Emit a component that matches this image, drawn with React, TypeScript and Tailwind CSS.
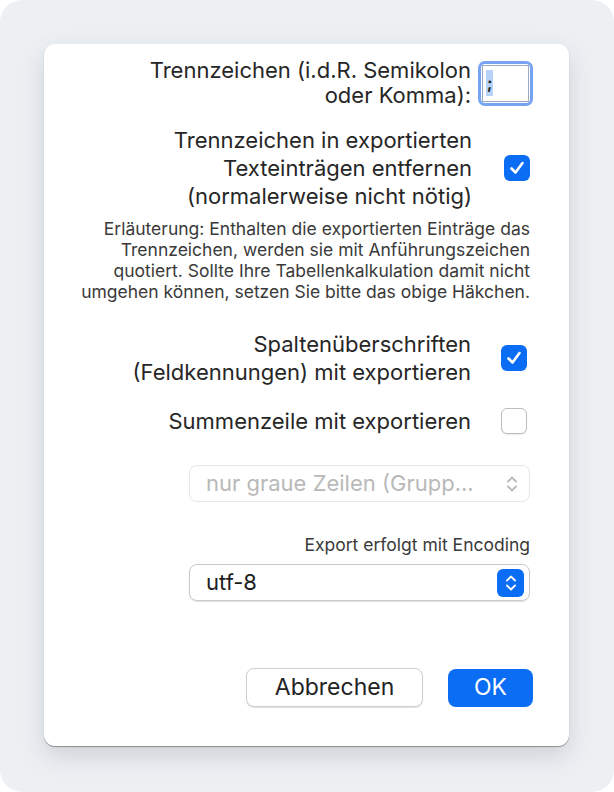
import React from "react";

const font = { fontFamily: 'Inter, "Liberation Sans", Arial, sans-serif' };

function Check({ checked }: { checked: boolean }) {
  if (!checked) {
    return (
      <div className="w-[26px] h-[26px] rounded-[6px] border border-[#bdbdbd] bg-white shadow-[0_1px_1px_rgba(0,0,0,0.08)]" />
    );
  }
  return (
    <div className="w-[26px] h-[26px] rounded-[6px] bg-[#0b6cf4] flex items-center justify-center">
      <svg width="18" height="18" viewBox="0 0 18 18" fill="none">
        <path d="M3.5 9.5 L7.5 13.5 L14.5 4" stroke="white" strokeWidth="2.6" strokeLinecap="round" strokeLinejoin="round" />
      </svg>
    </div>
  );
}

function Chevrons({ color }: { color: string }) {
  return (
    <svg width="14" height="20" viewBox="0 0 14 20" fill="none">
      <path d="M3 7.5 L7 3.5 L11 7.5" stroke={color} strokeWidth="1.8" strokeLinecap="round" strokeLinejoin="round" />
      <path d="M3 12.5 L7 16.5 L11 12.5" stroke={color} strokeWidth="1.8" strokeLinecap="round" strokeLinejoin="round" />
    </svg>
  );
}

export default function App() {
  return (
    <div className="w-[614px] h-[792px] bg-white" style={font}>
      <div className="w-[614px] h-[792px] rounded-[22px] bg-[#edf0f3] pt-[44px] pl-[44px]">
        <div className="w-[525px] h-[702px] rounded-[11px] bg-white shadow-[0_1px_1px_rgba(0,0,0,0.35),0_10px_24px_rgba(60,70,90,0.18)] pr-[36px] pt-[14px] flex flex-col items-end text-[#262626]">
          {/* separator */}
          <div className="flex items-center">
            <div className="text-right text-[22px] leading-[25px]">
              Trennzeichen (i.d.R. Semikolon
              <br />
              oder Komma):
            </div>
            <div className="ml-[7px] w-[55px] h-[45px] rounded-[7px] border-[3px] border-[#76a3f4] p-[1px]">
              <div className="w-full h-full bg-white border border-[#9aa9c4] pl-[3px] pt-[4px]">
                <span className="inline-block bg-[#b7d3fb] text-[16px] leading-[26px] px-[1px] font-bold text-[#222]">;</span>
              </div>
            </div>
          </div>

          {/* remove separators */}
          <div className="flex items-center mt-[18px] mr-[3px]">
            <div className="text-right text-[22px] leading-[28px]">
              Trennzeichen in exportierten
              <br />
              Texteinträgen entfernen
              <br />
              (normalerweise nicht nötig)
            </div>
            <div className="ml-[32px]">
              <Check checked />
            </div>
          </div>

          <div className="mt-[8px] mr-[3px] text-right text-[17.5px] leading-[21px] text-[#3a3a3a]">
            Erläuterung: Enthalten die exportierten Einträge das
            <br />
            Trennzeichen, werden sie mit Anführungszeichen
            <br />
            quotiert. Sollte Ihre Tabellenkalkulation damit nicht
            <br />
            umgehen können, setzen Sie bitte das obige Häkchen.
          </div>

          <div className="flex items-center mt-[28px] mr-[6px]">
            <div className="text-right text-[22px] leading-[28px]">
              Spaltenüberschriften
              <br />
              (Feldkennungen) mit exportieren
            </div>
            <div className="ml-[30px]">
              <Check checked />
            </div>
          </div>

          <div className="flex items-center mt-[21px] mr-[6px]">
            <div className="text-right text-[22px] leading-[28px]">Summenzeile mit exportieren</div>
            <div className="ml-[30px]">
              <Check checked={false} />
            </div>
          </div>

          <div className="mt-[30px] mr-[3px] w-[341px] h-[37px] rounded-[8px] border border-[#e6e6e6] flex items-center justify-between pl-[16px] pr-[10px] text-[22px] text-[#b9b9b9]">
            <span>nur graue Zeilen (Grupp...</span>
            <Chevrons color="#b9b9b9" />
          </div>

          <div className="mt-[33px] mr-[3px] text-[17.5px] leading-[20px] text-[#3a3a3a]">Export erfolgt mit Encoding</div>

          <div className="mt-[9px] mr-[3px] w-[341px] h-[37px] rounded-[8px] border border-[#c9c9c9] shadow-[0_1px_1px_rgba(0,0,0,0.12)] flex items-center justify-between pl-[16px] pr-[5px] text-[22px] text-[#1d1d1d]">
            <span>utf-8</span>
            <div className="w-[27px] h-[28px] rounded-[6px] bg-[#0b6cf4] flex items-center justify-center">
              <Chevrons color="white" />
            </div>
          </div>

          <div className="mt-[67px] flex items-center gap-[25px]">
            <div className="w-[177px] h-[39px] rounded-[8px] border border-[#cfcfcf] bg-white shadow-[0_1px_1px_rgba(0,0,0,0.12)] flex items-center justify-center text-[23px] text-[#222]">
              Abbrechen
            </div>
            <div className="w-[85px] h-[38px] rounded-[8px] bg-[#0b6cf4] flex items-center justify-center text-[23px] text-white">
              OK
            </div>
          </div>
        </div>
      </div>
    </div>
  );
}
